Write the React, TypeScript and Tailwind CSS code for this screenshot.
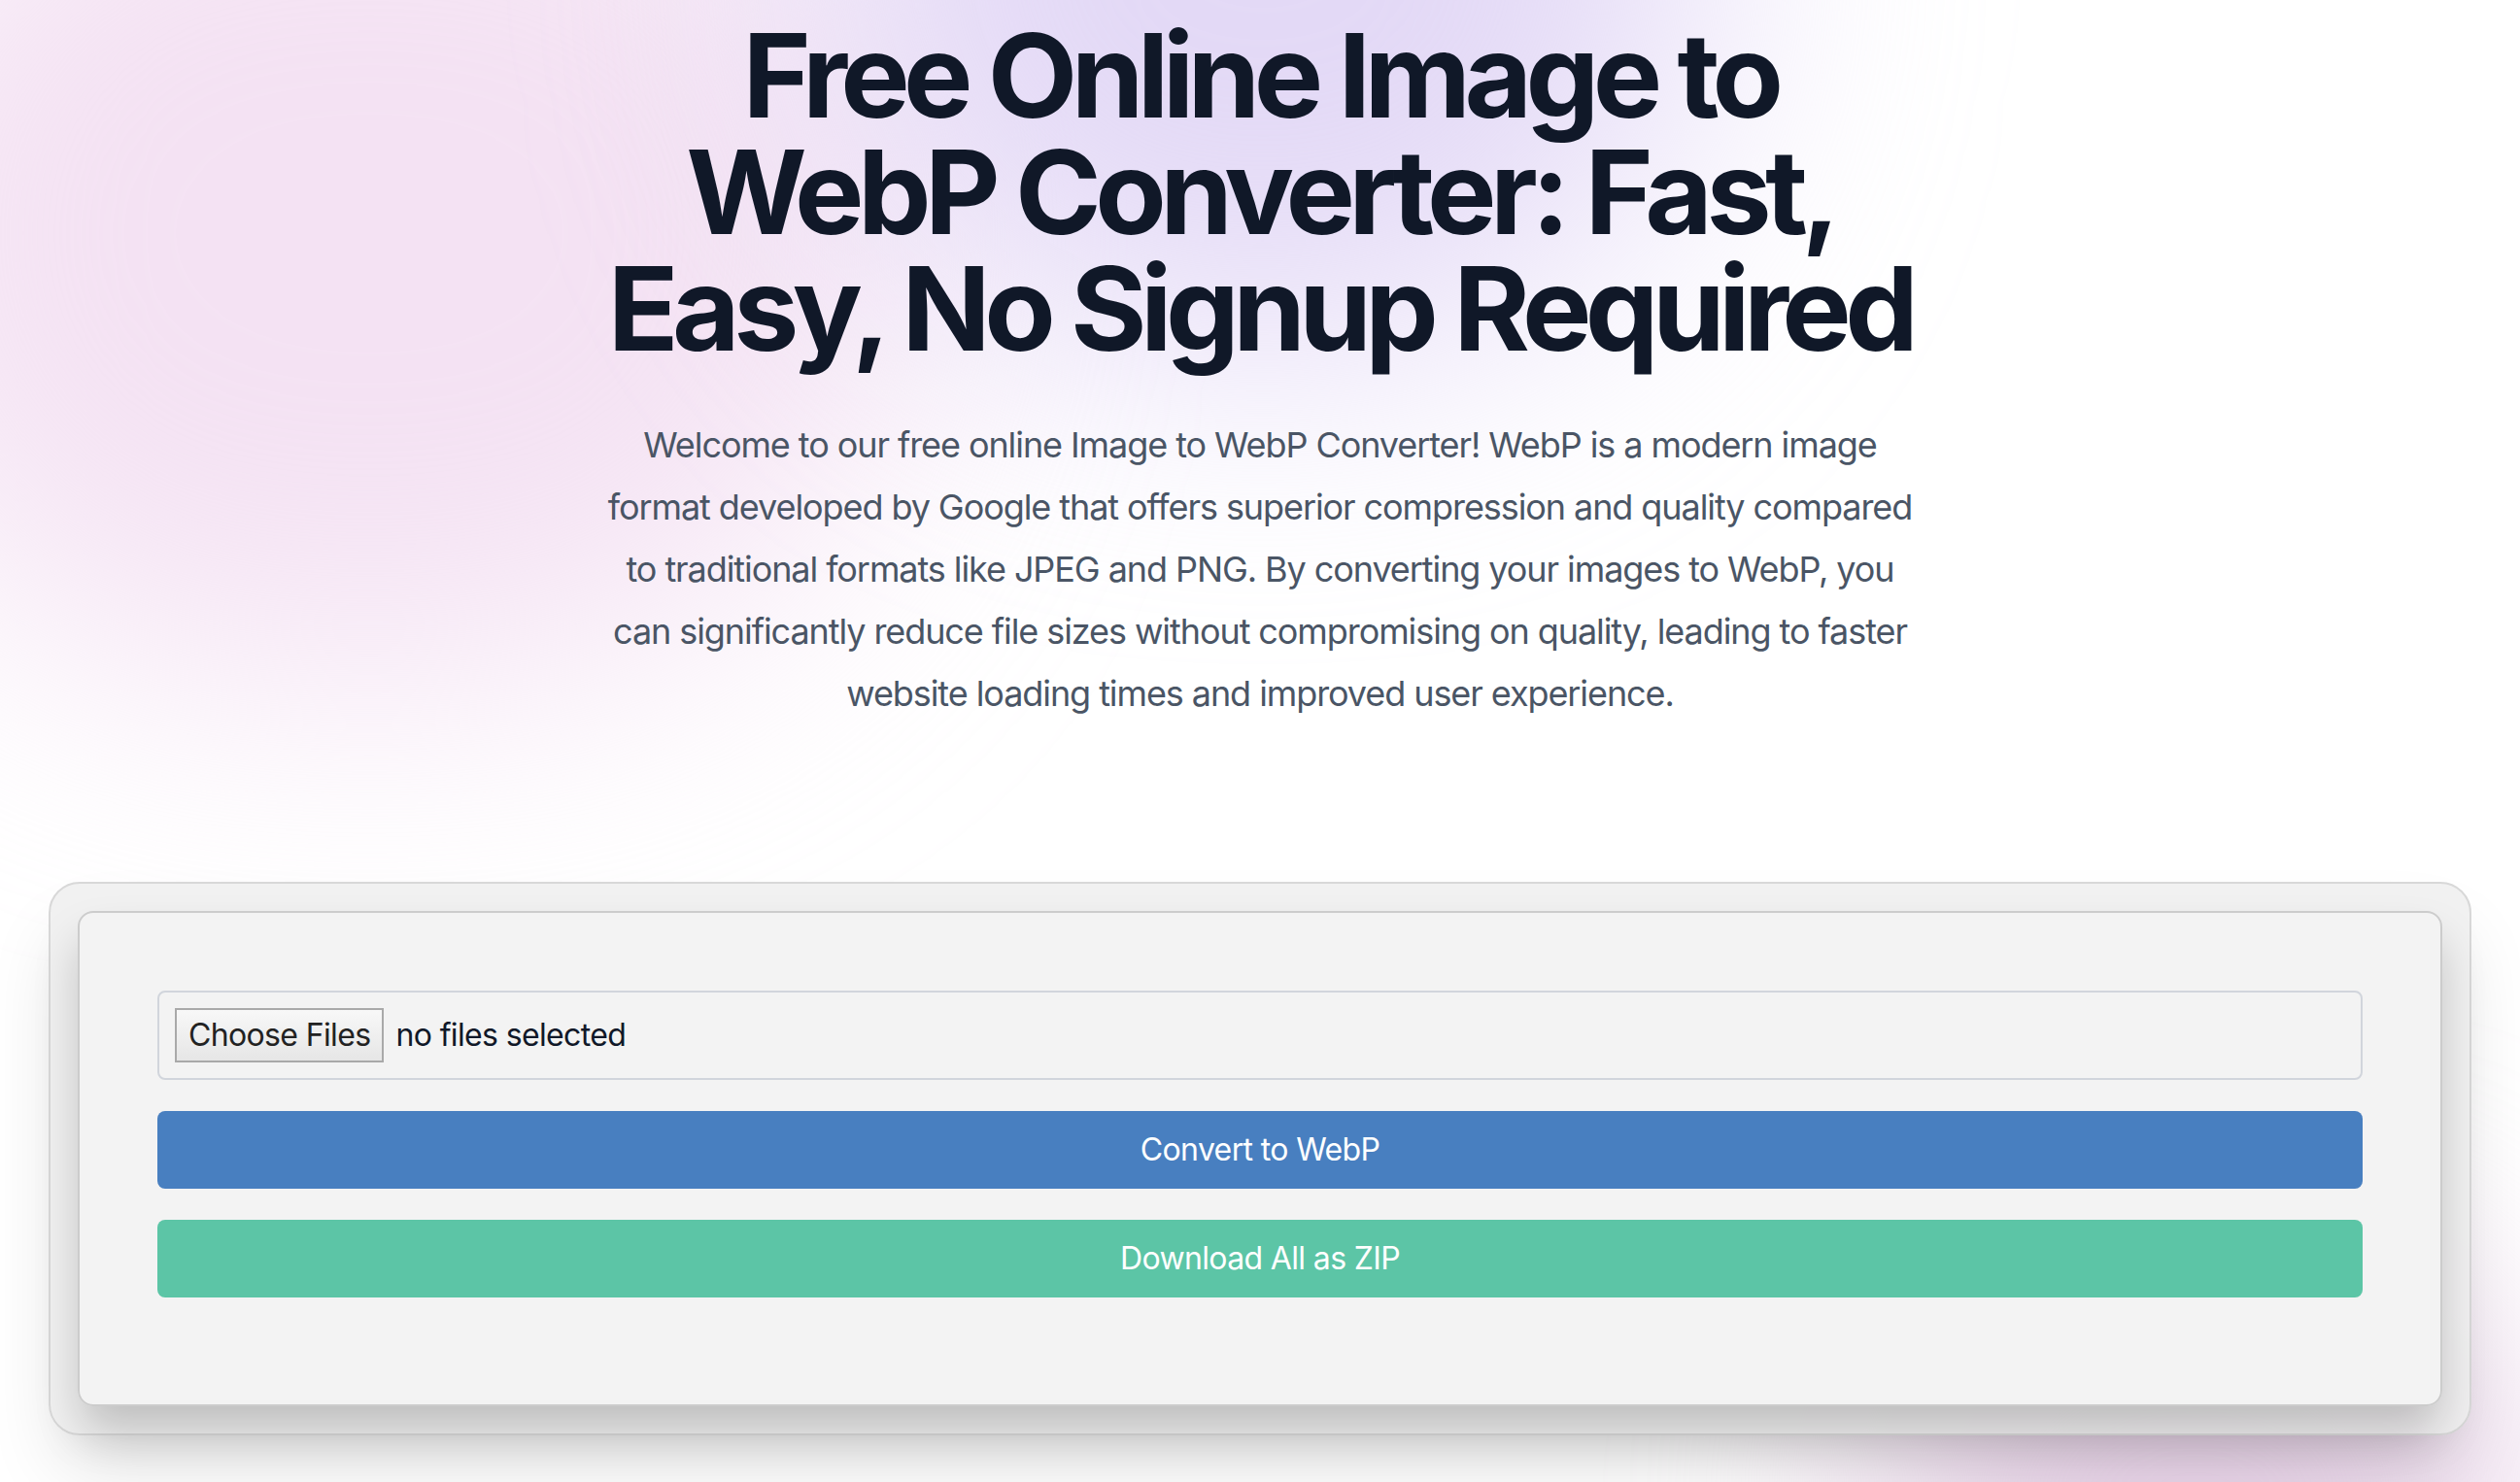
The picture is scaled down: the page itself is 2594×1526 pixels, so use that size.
export default function App() {
  return (
    <div className="[zoom:2]">
      <main className="relative h-[763px] overflow-hidden bg-white font-['Inter','Noto_Sans',sans-serif] tracking-[-0.02em]">
        {/* soft background blobs */}
        <div className="pointer-events-none absolute -left-[90px] -top-[110px] h-[460px] w-[560px] rounded-full bg-[#efd6ee]/70 blur-[70px]" />
        <div className="pointer-events-none absolute left-[420px] -top-[220px] h-[400px] w-[460px] rounded-full bg-[#dcd0f4]/80 blur-[70px]" />
        <div className="pointer-events-none absolute left-[960px] top-[650px] h-[240px] w-[340px] rounded-full bg-[#e3c9e3]/80 blur-[60px]" />

        <section className="relative z-10 mx-auto flex max-w-2xl flex-col items-center pt-[9px] text-center">
          <h1 className="text-6xl leading-none font-bold tracking-[-0.055em] text-gray-900">
            Free Online Image to WebP Converter: Fast, Easy, No Signup Required
          </h1>
          <p className="mt-6 text-lg leading-8 tracking-[-0.03em] text-gray-600">
            Welcome to our free online Image to WebP Converter! WebP is a modern image format developed by
            Google that offers superior compression and quality compared to traditional formats like JPEG and
            PNG. By converting your images to WebP, you can significantly reduce file sizes without
            compromising on quality, leading to faster website loading times and improved user experience.
          </p>
        </section>

        <section className="relative z-10 mx-[25px] mt-[81px] rounded-2xl border border-[#d8d8d8] bg-[#efefef]/90 p-[14px] shadow-[0_22px_40px_-8px_rgba(0,0,0,0.14)]">
          <div className="flex flex-col gap-4 rounded-lg border border-[#cccccc] bg-[#f3f3f3]/90 px-10 pt-10 pb-[55px] shadow-[0_14px_24px_-2px_rgba(0,0,0,0.22)]">
            <div className="flex h-[46px] items-center rounded border border-gray-300 px-2">
              <span className="flex h-[28px] items-center border border-[#a9a9a9] bg-gradient-to-b from-[#f8f8f8] to-[#e6e6e6] px-[6px] text-base text-[#222]">
                Choose Files
              </span>
              <span className="ml-1.5 text-base text-gray-900">no files selected</span>
            </div>
            <button className="h-10 w-full rounded bg-[#487fc0] text-base text-white">Convert to WebP</button>
            <button className="h-10 w-full rounded bg-[#5cc5a6] text-base text-white">Download All as ZIP</button>
          </div>
        </section>
      </main>
    </div>
  );
}
